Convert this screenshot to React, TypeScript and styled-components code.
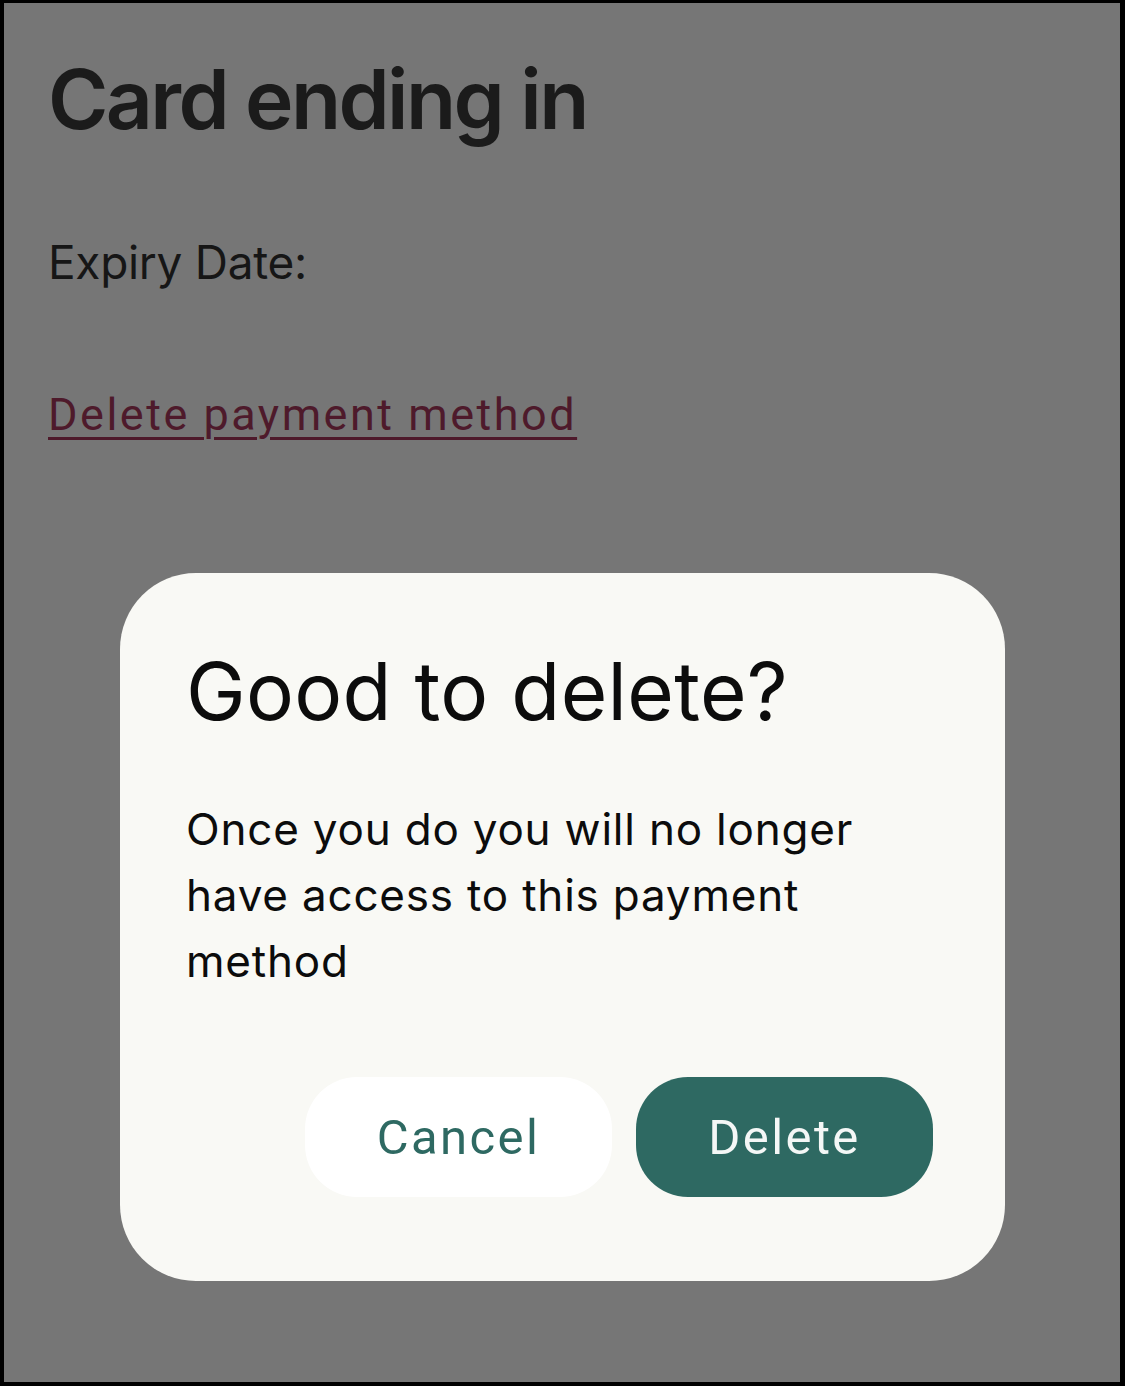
import React from 'react';
import styled, { createGlobalStyle } from 'styled-components';

const GlobalStyle = createGlobalStyle`
  * {
    box-sizing: border-box;
  }
  body {
    margin: 0;
    background: #000;
  }
`;

export default function App() {
  return (
    <>
      <GlobalStyle />
      <Frame>
        <Page>
          <Title>Card ending in</Title>
          <Expiry>Expiry Date:</Expiry>
          <DeleteLink href="#">Delete payment method</DeleteLink>
        </Page>
        <Dialog role="dialog" aria-labelledby="dialog-title">
          <DialogTitle id="dialog-title">Good to delete?</DialogTitle>
          <DialogBody>
            Once you do you will no longer have access to this payment method
          </DialogBody>
          <Actions>
            <ActionButton variant="secondary">Cancel</ActionButton>
            <ActionButton variant="primary">Delete</ActionButton>
          </Actions>
        </Dialog>
      </Frame>
    </>
  );
}

const Frame = styled.div`
  position: relative;
  width: 1125px;
  height: 1386px;
  border-style: solid;
  border-color: #000;
  border-width: 3px 5px 4px 4px;
  background: #767676;
  overflow: hidden;
`;

const Page = styled.main`
  display: flex;
  flex-direction: column;
  align-items: flex-start;
  padding: 47px 0 0 44px;
  font-family: Inter, 'Noto Sans', sans-serif;
  color: #1b1b1b;
`;

const Title = styled.h1`
  margin: 0;
  font-size: 82px;
  line-height: 100px;
  font-weight: 600;
  letter-spacing: -2.6px;
`;

const Expiry = styled.p`
  margin: 84px 0 0;
  font-size: 46px;
  line-height: 56px;
  font-weight: 400;
  letter-spacing: -0.3px;
  color: #161616;
`;

const DeleteLink = styled.a`
  margin-top: 97px;
  font-family: Roboto, 'Liberation Sans', sans-serif;
  font-size: 45px;
  line-height: 56px;
  letter-spacing: 2.5px;
  color: #4e1a2b;
  text-decoration: underline;
  text-decoration-thickness: 3px;
  text-underline-offset: 7px;
`;

const Dialog = styled.section`
  position: absolute;
  left: 116px;
  top: 570px;
  width: 885px;
  height: 708px;
  display: flex;
  flex-direction: column;
  padding: 70px 72px 84px 66px;
  background: #f9f9f5;
  border-radius: 76px;
  font-family: Inter, 'Noto Sans', sans-serif;
  color: #0c0c0c;
`;

const DialogTitle = styled.h2`
  margin: 0;
  font-size: 80px;
  line-height: 96px;
  font-weight: 400;
  letter-spacing: 0.3px;
`;

const DialogBody = styled.p`
  margin: 57px 0 0;
  font-size: 44px;
  line-height: 66px;
  font-weight: 400;
  letter-spacing: 0.8px;
  max-width: 720px;
`;

const Actions = styled.div`
  display: flex;
  justify-content: flex-end;
  gap: 24px;
  margin-top: auto;
`;

const ActionButton = styled.button<{ variant: 'primary' | 'secondary' }>`
  height: 120px;
  width: ${({ variant }) => (variant === 'primary' ? '297px' : '307px')};
  border: none;
  border-radius: 52px;
  font-family: Roboto, 'Liberation Sans', sans-serif;
  font-size: 49px;
  font-weight: 400;
  letter-spacing: 2.4px;
  cursor: pointer;
  background: ${({ variant }) => (variant === 'primary' ? '#2e6962' : '#ffffff')};
  color: ${({ variant }) => (variant === 'primary' ? '#f4f7f6' : '#2e6962')};
`;
